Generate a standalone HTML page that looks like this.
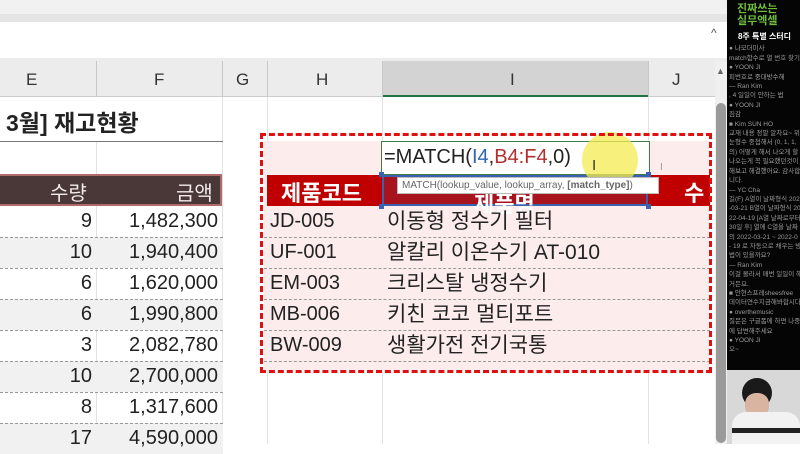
<!DOCTYPE html>
<html><head><meta charset="utf-8"><style>
*{margin:0;padding:0;box-sizing:border-box}
body{width:800px;height:444px;overflow:hidden;background:#fff;font-family:"Liberation Sans","Noto Sans CJK KR",sans-serif;position:relative}
.a{position:absolute}
.t{position:absolute;white-space:nowrap;color:#222}
.dl{position:absolute;height:0;border-top:1px dashed #999}
.vl{position:absolute;width:1px;background:#e2e2e2}
.chat{position:absolute;left:727px;top:0;width:73px;height:370px;background:#050505;color:#999;font-size:6.5px;line-height:9.4px;overflow:hidden;padding:3px 0 0 2px}
.chat div{white-space:nowrap}
</style></head><body>
<div class="a" style="left:0;top:0;width:727px;height:14px;background:#f1f1f1"></div>
<div class="a" style="left:0;top:14px;width:727px;height:8px;background:#e4e4e4"></div>
<div class="a" style="left:0;top:22px;width:727px;height:36px;background:#fff"></div>
<div class="a" style="left:0;top:58px;width:727px;height:3px;background:#ececec"></div>
<div class="t" style="left:711px;top:26px;font-size:12px;color:#555">^</div>
<div class="a" style="left:0;top:61px;width:715px;height:36px;background:#ececec;border-bottom:1px solid #ccc"></div>
<div class="a" style="left:382px;top:61px;width:266px;height:36px;background:#d3d3d3;border-bottom:2px solid #217346"></div>
<div class="vl" style="left:96px;top:61px;height:36px;background:#c8c8c8"></div>
<div class="vl" style="left:222px;top:61px;height:36px;background:#c8c8c8"></div>
<div class="vl" style="left:267px;top:61px;height:36px;background:#c8c8c8"></div>
<div class="vl" style="left:382px;top:61px;height:36px;background:#c8c8c8"></div>
<div class="vl" style="left:648px;top:61px;height:36px;background:#c8c8c8"></div>
<div class="t" style="left:26px;top:70px;font-size:17px;color:#333">E</div>
<div class="t" style="left:154px;top:70px;font-size:17px;color:#333">F</div>
<div class="t" style="left:236px;top:70px;font-size:17px;color:#333">G</div>
<div class="t" style="left:316px;top:70px;font-size:17px;color:#333">H</div>
<div class="t" style="left:510px;top:70px;font-size:17px;color:#333">I</div>
<div class="t" style="left:672px;top:70px;font-size:17px;color:#333">J</div>
<div class="a" style="left:715px;top:61px;width:12px;height:383px;background:#f0f0f0"></div>
<div class="a" style="left:716px;top:103px;width:10px;height:340px;background:#9a9a9a;border-radius:5px"></div>
<div class="t" style="left:716px;top:66px;font-size:9px;color:#666">▲</div>
<div class="vl" style="left:96px;top:141px;height:303px"></div>
<div class="vl" style="left:222px;top:97px;height:347px"></div>
<div class="vl" style="left:267px;top:97px;height:347px"></div>
<div class="vl" style="left:382px;top:97px;height:347px"></div>
<div class="vl" style="left:648px;top:97px;height:347px"></div>
<div class="t" style="left:6px;top:104px;font-size:23px;font-weight:bold;color:#222">3월] 재고현황</div>
<div class="a" style="left:0;top:141px;width:223px;height:1px;background:#777"></div>
<div class="a" style="left:0;top:174px;width:222px;height:32px;background:#4a3838;border:2px solid #b06a6a;border-left:none"></div>
<div class="t" style="left:50px;top:177px;font-size:20px;color:#f2eaea">수량</div>
<div class="t" style="left:176px;top:177px;font-size:20px;color:#f2eaea">금액</div>
<div class="a" style="left:0;top:237px;width:223px;height:31px;background:#f1f1f1"></div>
<div class="a" style="left:0;top:299px;width:223px;height:31px;background:#f1f1f1"></div>
<div class="a" style="left:0;top:361px;width:223px;height:31px;background:#f1f1f1"></div>
<div class="a" style="left:0;top:423px;width:223px;height:31px;background:#f1f1f1"></div>
<div class="dl" style="left:0;top:237px;width:223px"></div>
<div class="dl" style="left:0;top:268px;width:223px"></div>
<div class="dl" style="left:0;top:299px;width:223px"></div>
<div class="dl" style="left:0;top:330px;width:223px"></div>
<div class="dl" style="left:0;top:361px;width:223px"></div>
<div class="dl" style="left:0;top:392px;width:223px"></div>
<div class="dl" style="left:0;top:423px;width:223px"></div>
<div style="position:absolute;left:0;top:206px;width:92px;text-align:right;font-size:20px;line-height:31px;color:#222">9<br>10<br>6<br>6<br>3<br>10<br>8<br>17</div>
<div style="position:absolute;left:96px;top:206px;width:122px;text-align:right;font-size:20px;line-height:31px;color:#222">1,482,300<br>1,940,400<br>1,620,000<br>1,990,800<br>2,082,780<br>2,700,000<br>1,317,600<br>4,590,000</div>
<div class="a" style="left:264px;top:141px;width:446px;height:229px;background:#fcecec"></div>
<div class="a" style="left:267px;top:175px;width:115px;height:31px;background:#c00000"></div>
<div class="a" style="left:382px;top:175px;width:266px;height:31px;background:#a8141e;border:2px solid #3a62b0"></div>
<div class="a" style="left:648px;top:175px;width:62px;height:31px;background:#c00000"></div>
<div class="t" style="left:281px;top:176px;font-size:22px;font-weight:bold;color:#fff">제품코드</div>
<div class="t" style="left:474px;top:187px;font-size:22px;font-weight:bold;color:#fff">제품명</div>
<div class="t" style="left:684px;top:176px;font-size:22px;font-weight:bold;color:#fff">수</div>
<div class="dl" style="left:264px;top:237px;width:446px"></div>
<div class="dl" style="left:264px;top:268px;width:446px"></div>
<div class="dl" style="left:264px;top:299px;width:446px"></div>
<div class="dl" style="left:264px;top:330px;width:446px"></div>
<div class="dl" style="left:264px;top:361px;width:446px"></div>
<div style="position:absolute;left:270px;top:206px;font-size:20px;line-height:31px;color:#222">JD-005<br>UF-001<br>EM-003<br>MB-006<br>BW-009</div>
<div style="position:absolute;left:387px;top:206px;font-size:21px;line-height:31px;color:#222">이동형 정수기 필터<br>알칼리 이온수기 AT-010<br>크리스탈 냉정수기<br>키친 코코 멀티포트<br>생활가전 전기국통</div>
<div class="a" style="left:381px;top:141px;width:269px;height:34px;background:#fff;border:1px solid #3f7a4a"></div>
<div class="a" style="left:582px;top:132px;width:56px;height:56px;border-radius:50%;background:rgba(245,235,80,.75)"></div>
<div class="t" style="left:384px;top:146px;font-size:20px;color:#222">=MATCH(<span style="color:#2f66b3">I4</span>,<span style="color:#b03030">B4:F4</span>,0)</div>
<div class="t" style="left:592px;top:157px;font-size:15px;color:#333">I</div>
<div class="t" style="left:660px;top:162px;font-size:10px;color:#999">I</div>
<div class="a" style="left:397px;top:177px;width:262px;height:17px;background:#fff;border:1px solid #bbb"></div>
<div class="t" style="left:402px;top:180px;font-size:10px;color:#666">MATCH(lookup_value, lookup_array, <b>[match_type]</b>)</div>
<div class="a" style="left:379px;top:172px;width:5px;height:5px;background:#3a62b0"></div>
<div class="a" style="left:646px;top:172px;width:5px;height:5px;background:#3a62b0"></div>
<div class="a" style="left:379px;top:204px;width:5px;height:5px;background:#3a62b0"></div>
<div class="a" style="left:646px;top:204px;width:5px;height:5px;background:#3a62b0"></div>
<div class="a" style="left:260px;top:133px;width:452px;height:240px;border:3px dashed #e01010"></div>
<div class="chat">
<div style="color:#6fbf3a;font-weight:bold;font-size:11px;line-height:12px;padding-left:8px">진짜쓰는<br>실무엑셀</div>
<div style="color:#fff;font-weight:bold;font-size:8px;text-align:center;margin:5px 0 3px">8주 특별 스터디</div>
<div>● 나모더미사</div><div>match함수로 열 번호 찾기</div><div>● YOON JI</div><div>피번호로 중대방수해</div><div>— Ran Kim</div><div>, 4 일일이 안하는 법</div><div>● YOON JI</div><div>짐감</div><div>■ Kim SUN HO</div><div>교재 내용 정말 알차요~ 위</div><div>눈형수 중첩해서 (0, 1, 1,</div><div>의) 어떻게 해서 나오게 할</div><div>나오는게 꼭 필요했던것이</div><div>해보고 해결했어요. 감사합</div><div>니다.</div><div>— YC Cha</div><div>길(F) A열이 날짜형식 2022</div><div>-03-21 B열이 날짜형식 20</div><div>22-04-19 [A열 날짜로부터</div><div>30일 후] 열에 C열을 날짜</div><div>의 2022-03-21 ~ 2022-0</div><div>- 19 로 자동으로 채우는 방</div><div>법이 있을까요?</div><div>— Ran Kim</div><div>이걸 몰라서 매번 일일이 해</div><div>거든요.</div><div>■ 안현스프레sheesfree</div><div>데이터연수지금해봐합시다</div><div>● overthemusic</div><div>질문은 구글폼에 하면 나중</div><div>에 답변해주세요</div><div>● YOON JI</div><div>오~</div>
</div>
<div class="a" style="left:727px;top:370px;width:73px;height:74px;background:#d8d8d8"></div>
<div class="a" style="left:742px;top:378px;width:30px;height:30px;border-radius:50%;background:#1a1a1a"></div>
<div class="a" style="left:745px;top:393px;width:24px;height:24px;border-radius:45%;background:#d9b4a0"></div>
<div class="a" style="left:732px;top:412px;width:68px;height:32px;border-radius:14px 14px 0 0;background:#f2f2f2"></div>
<div class="a" style="left:732px;top:428px;width:68px;height:5px;background:#222"></div>
</body></html>
